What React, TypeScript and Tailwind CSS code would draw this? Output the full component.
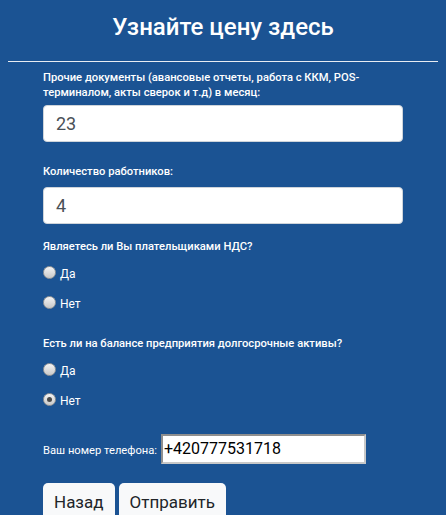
const questions = [
  { label: "Являетесь ли Вы плательщиками НДС?", checked: -1 },
  { label: "Есть ли на балансе предприятия долгосрочные активы?", checked: 1 },
];

function Radio({ label, checked }: { label: string; checked: boolean }) {
  return (
    <label className="flex items-center h-[30px]">
      <span className="relative w-[13px] h-[13px] rounded-full border border-[#9a9a9a] bg-gradient-to-b from-[#f4f4f4] to-[#c9c9c9] flex items-center justify-center">
        {checked && <span className="w-[5px] h-[5px] rounded-full bg-[#4a4a4a]" />}
      </span>
      <span className="ml-[4px] mt-[3px] text-[12px] text-white">{label}</span>
    </label>
  );
}

export default function App() {
  return (
    <div className="h-[515px] bg-[#1b5393] font-['Roboto',sans-serif] text-white overflow-hidden">
      <h1 className="pt-[12px] h-[55px] text-center text-[24px] font-medium leading-[30px]">
        Узнайте цену здесь
      </h1>
      <hr className="mx-[8px] mt-[6px] border-0 h-px bg-[#e8ecf2]" />

      <div className="mx-[43px] pt-[8px]">
        <p className="text-[11.2px] font-medium leading-[15px] pr-[40px]">
          Прочие документы (авансовые отчеты, работа с ККМ, POS-терминалом, акты сверок и т.д) в месяц:
        </p>
        <div className="mt-[5px] h-[37px] rounded-[4px] bg-white border border-[#ced4da] flex items-center px-[12px] text-[18px] text-[#495057]">
          23
        </div>

        <p className="mt-[22px] text-[11.2px] font-medium leading-[15px]">Количество работников:</p>
        <div className="mt-[8px] h-[37px] rounded-[4px] bg-white border border-[#ced4da] flex items-center px-[12px] text-[18px] text-[#495057]">
          4
        </div>

        {questions.map((q, qi) => (
          <div key={qi} className={qi === 0 ? "mt-[15px]" : "mt-[19px]"}>
            <p className="text-[11.2px] font-medium leading-[15px] mb-[3px]">{q.label}</p>
            <Radio label="Да" checked={q.checked === 0} />
            <Radio label="Нет" checked={q.checked === 1} />
          </div>
        ))}

        <div className="mt-[20px] flex items-center">
          <span className="text-[11.2px] mt-[4px]">Ваш номер телефона:</span>
          <div className="ml-[4px] w-[205px] h-[30px] bg-white border-2 border-[#8f8f8f] border-r-[#c8c8c8] border-b-[#c8c8c8] flex items-center pl-[1px] text-[16px] text-black">
            +420777531718
          </div>
        </div>

        <div className="mt-[19px] flex gap-[4px]">
          <button className="h-[40px] px-[11px] rounded-t-[5px] bg-[#f8f9fa] text-[#212529] text-[17px]">Назад</button>
          <button className="h-[40px] px-[11px] rounded-t-[5px] bg-[#f8f9fa] text-[#212529] text-[17px]">Отправить</button>
        </div>
      </div>
    </div>
  );
}
